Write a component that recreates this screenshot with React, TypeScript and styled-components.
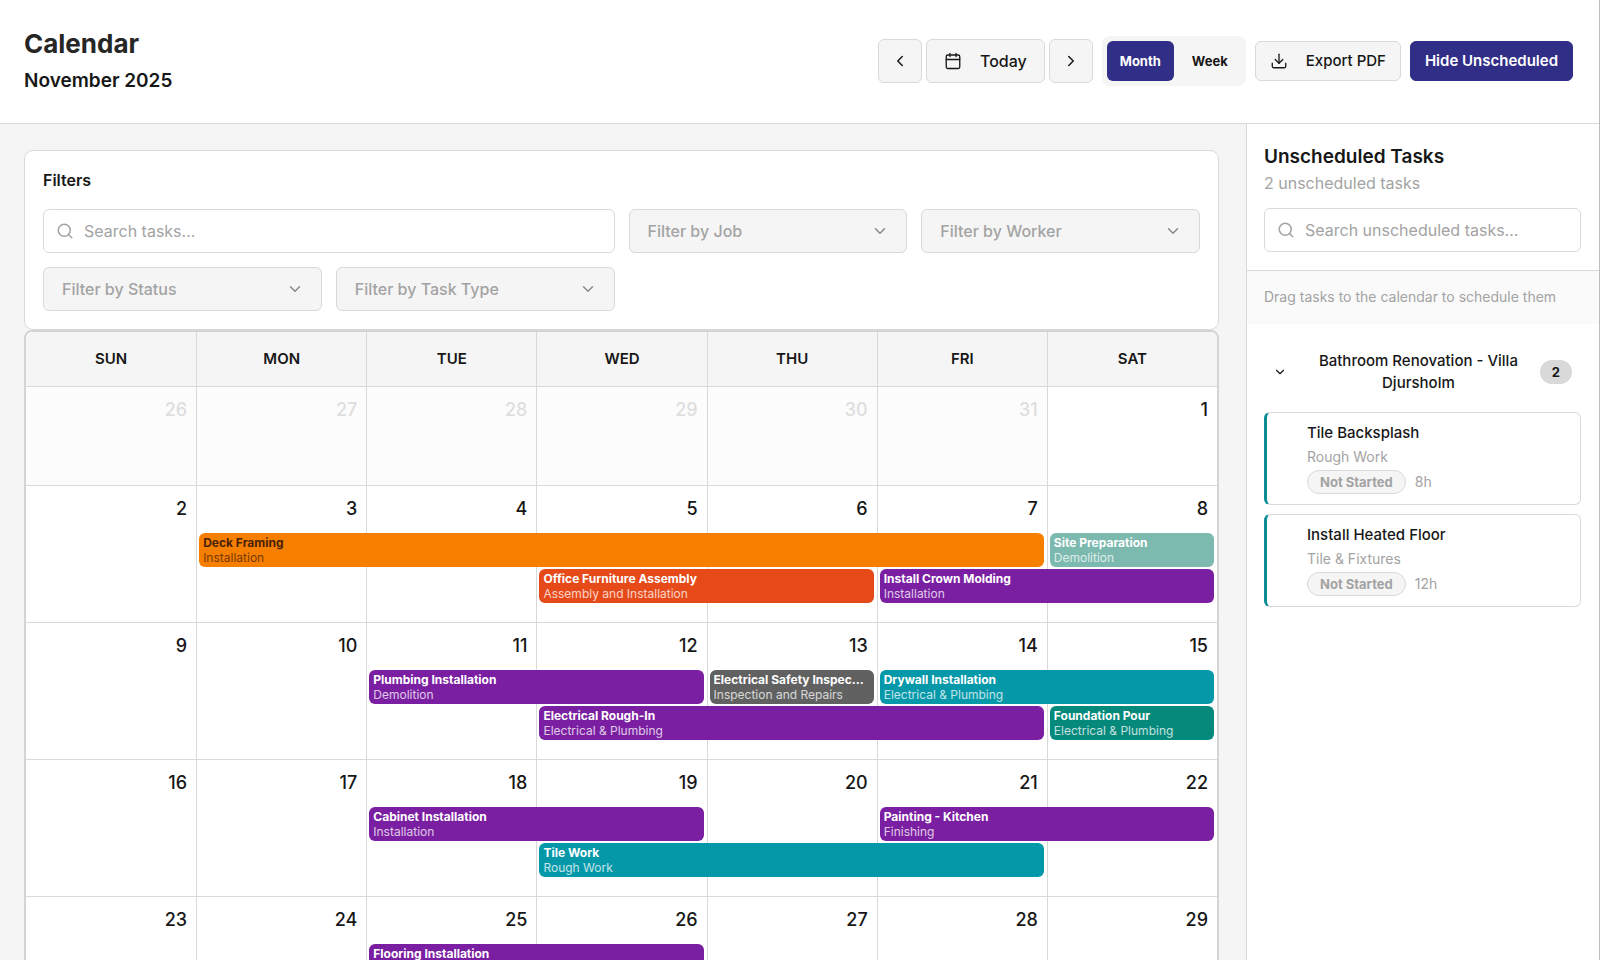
import React from "react";
import styled, { createGlobalStyle, css } from "styled-components";
import { Calendar, ChevronDown, ChevronLeft, ChevronRight, Download, Search } from "lucide-react";

const line = "#d9d9d9";
const ink = "#171717";
const muted = "#a3a3a3";
const brand = "#312e87";
const surface = "#f5f5f5";

const GlobalStyle = createGlobalStyle`
  *, *::before, *::after { box-sizing: border-box; }
  body { margin: 0; background: #fff; color: ${ink}; font: 500 16px/22px Inter, "Liberation Sans", sans-serif; }
  h1, h2, h3, p, ul { margin: 0; padding: 0; }
  button, input, select { font: inherit; color: inherit; }
  button { cursor: pointer; }
`;

const Page = styled.div`
  display: flex;
  flex-direction: column;
  height: 100vh;
  overflow: hidden;
  border-right: 1px solid #bdbdbd;
`;

const Header = styled.header`
  display: flex;
  flex: none;
  align-items: center;
  justify-content: space-between;
  padding: 24px 26px 25px 24px;
  border-bottom: 1px solid ${line};
`;

const Title = styled.h1`
  font-size: 26px;
  line-height: 39px;
  font-weight: 700;
  color: #262626;
`;

const Subtitle = styled.p`
  font-size: 19px;
  line-height: 35px;
  font-weight: 600;
`;

const Toolbar = styled.div`
  display: flex;
  align-items: center;
  gap: 9px;
`;

const NavGroup = styled.div`
  display: flex;
  gap: 4px;
`;

const Button = styled.button<{ $kind?: "primary" }>`
  display: flex;
  align-items: center;
  justify-content: center;
  gap: 18px;
  height: 40px;
  padding: 0 14px;
  border: 1px solid ${line};
  border-radius: 6px;
  background: ${surface};
  font-size: 15px;
  white-space: nowrap;
  ${(p) =>
    p.$kind === "primary" &&
    css`
      background: ${brand};
      border-color: ${brand};
      color: #fff;
      font-weight: 600;
    `}
`;

const StepButton = styled(Button)`
  width: 44px;
  height: 44px;
  padding: 0;
`;

const TodayButton = styled(Button)`
  height: 44px;
  padding: 0 17px;
  font-size: 16px;
`;

const Toggle = styled.div`
  display: flex;
  gap: 5px;
  padding: 5px;
  border-radius: 8px;
  background: ${surface};
`;

const ToggleButton = styled.button<{ $active?: boolean }>`
  height: 40px;
  padding: 0 13px;
  border: 0;
  border-radius: 6px;
  font-size: 13px;
  font-weight: 700;
  background: ${(p) => (p.$active ? brand : "transparent")};
  color: ${(p) => (p.$active ? "#fff" : ink)};
`;

const Body = styled.div`
  display: flex;
  flex: 1;
  min-height: 0;
`;

const Main = styled.main`
  flex: 1;
  min-width: 0;
  overflow: hidden;
  padding: 26px 27px 0 24px;
  background: ${surface};
`;

const FilterCard = styled.section`
  padding: 18px;
  border: 1px solid ${line};
  border-radius: 9px;
  background: #fff;
`;

const FilterTitle = styled.h2`
  margin-bottom: 18px;
  font-size: 16px;
  line-height: 22px;
  font-weight: 600;
`;

const FilterGrid = styled.div`
  display: grid;
  grid-template-columns: repeat(4, minmax(0, 1fr));
  gap: 14px;
`;

const Field = styled.div<{ $wide?: boolean }>`
  position: relative;
  display: flex;
  align-items: center;
  color: ${muted};
  ${(p) => p.$wide && "grid-column: span 2;"}
`;

const SearchInput = styled.input`
  width: 100%;
  height: 44px;
  padding: 0 16px 0 40px;
  border: 1px solid ${line};
  border-radius: 6px;
  background: #fff;
  color: ${ink};
  font-weight: 400;
  &::placeholder { color: ${muted}; opacity: 1; }
`;

const SearchIcon = styled(Search)`
  position: absolute;
  left: 13px;
`;

const Select = styled.select`
  appearance: none;
  width: 100%;
  height: 44px;
  padding: 0 40px 0 18px;
  border: 1px solid ${line};
  border-radius: 6px;
  background: ${surface};
`;

const SelectIcon = styled(ChevronDown)`
  position: absolute;
  right: 18px;
  pointer-events: none;
  color: #8a8a8a;
`;

const CalendarGrid = styled.section`
  border: 2px solid #d4d4d4;
  border-radius: 8px;
  overflow: hidden;
  background: #fff;
`;

const WeekHead = styled.div`
  display: grid;
  grid-template-columns: repeat(7, minmax(0, 1fr));
  background: ${surface};
`;

const DayName = styled.div`
  padding: 16px 0;
  text-align: center;
  font-size: 15px;
  font-weight: 600;
  border-bottom: 1px solid ${line};
  & + & { border-left: 1px solid ${line}; }
`;

const Week = styled.div<{ $lanes: number }>`
  display: grid;
  grid-template-columns: repeat(7, minmax(0, 1fr));
  grid-template-rows: 47px ${(p) => (p.$lanes ? `repeat(${p.$lanes}, 36px)` : "34px")} 17px;
  border-bottom: 1px solid ${line};
`;

const Day = styled.div<{ $col: number; $outside: boolean }>`
  grid-column: ${(p) => p.$col};
  grid-row: 1 / -1;
  padding: 11px 9px;
  text-align: right;
  font-size: 18px;
  line-height: 24px;
  color: ${(p) => (p.$outside ? "#dedede" : ink)};
  background: ${(p) => (p.$outside ? "#fcfcfc" : "#fff")};
  border-left: ${(p) => (p.$col > 1 ? `1px solid ${line}` : "0")};
`;

const EventBar = styled.button<{ $from: number; $to: number; $lane: number; $color: string; $dark?: boolean }>`
  z-index: 1;
  grid-column: ${(p) => p.$from} / ${(p) => p.$to + 1};
  grid-row: ${(p) => p.$lane + 1};
  min-width: 0;
  height: 34px;
  margin: 0 3px;
  padding: 2px 9px 2px 4px;
  border: 0;
  border-radius: 6px;
  text-align: left;
  font-size: 12px;
  line-height: 15px;
  background: ${(p) => p.$color};
  color: ${(p) => (p.$dark ? "#4a2208" : "#fff")};
`;

const EventName = styled.span`
  display: block;
  overflow: hidden;
  text-overflow: ellipsis;
  white-space: nowrap;
  font-weight: 700;
`;

const EventType = styled(EventName)`
  font-weight: 400;
  opacity: 0.75;
`;

const Sidebar = styled.aside`
  flex: none;
  width: 353px;
  border-left: 1px solid ${line};
  background: #fff;
`;

const SideHead = styled.div`
  padding: 18px 18px 18px 17px;
  border-bottom: 1px solid ${line};
`;

const SideTitle = styled.h2`
  font-size: 19px;
  line-height: 29px;
  font-weight: 600;
`;

const SideCount = styled.p`
  margin-bottom: 13px;
  line-height: 24px;
  font-weight: 400;
  color: ${muted};
`;

const Hint = styled.p`
  padding: 15px 17px 17px;
  background: #fafafa;
  color: ${muted};
  font-size: 14px;
  line-height: 21px;
  font-weight: 400;
`;

const Group = styled.section`
  padding: 17px 18px 0 17px;
`;

const GroupToggle = styled.button`
  display: flex;
  align-items: center;
  gap: 18px;
  width: 100%;
  margin-bottom: 9px;
  padding: 9px;
  border: 0;
  background: none;
`;

const GroupName = styled.span`
  flex: 1;
  padding-left: 10px;
  text-align: center;
  font-size: 15px;
`;

const Count = styled.span`
  padding: 0 12px;
  border-radius: 12px;
  background: #d9d9d9;
  font-size: 13px;
  line-height: 24px;
  font-weight: 700;
`;

const TaskList = styled.ul`
  display: flex;
  flex-direction: column;
  gap: 9px;
  list-style: none;
`;

const Task = styled.li`
  padding: 9px 9px 9px 40px;
  border: 1px solid ${line};
  border-left: 3px solid #0b8d96;
  border-radius: 6px;
`;

const TaskTitle = styled.h3`
  font-size: 15px;
  line-height: 22px;
  font-weight: 500;
`;

const TaskType = styled.p`
  font-size: 14px;
  line-height: 25px;
  font-weight: 400;
  color: ${muted};
`;

const TaskMeta = styled(TaskType)`
  display: flex;
  align-items: center;
  gap: 9px;
  line-height: 26px;
`;

const Status = styled.span`
  padding: 0 12px;
  border: 1px solid ${line};
  border-radius: 12px;
  background: ${surface};
  font-size: 13px;
  line-height: 22px;
  font-weight: 700;
`;

type Item = { name: string; type: string; from: number; to: number; lane: number; color: string; dark?: boolean };

const purple = "#7b1fa2";
const cyan = "#0598a9";

const weeks: { days: number[]; events: Item[] }[] = [
  { days: [26, 27, 28, 29, 30, 31, 1], events: [] },
  {
    days: [2, 3, 4, 5, 6, 7, 8],
    events: [
      { name: "Deck Framing", type: "Installation", from: 2, to: 6, lane: 1, color: "#f77f00", dark: true },
      { name: "Site Preparation", type: "Demolition", from: 7, to: 7, lane: 1, color: "#7cb9af" },
      { name: "Office Furniture Assembly", type: "Assembly and Installation", from: 4, to: 5, lane: 2, color: "#e64a19" },
      { name: "Install Crown Molding", type: "Installation", from: 6, to: 7, lane: 2, color: purple },
    ],
  },
  {
    days: [9, 10, 11, 12, 13, 14, 15],
    events: [
      { name: "Plumbing Installation", type: "Demolition", from: 3, to: 4, lane: 1, color: purple },
      { name: "Electrical Safety Inspection", type: "Inspection and Repairs", from: 5, to: 5, lane: 1, color: "#616161" },
      { name: "Drywall Installation", type: "Electrical & Plumbing", from: 6, to: 7, lane: 1, color: cyan },
      { name: "Electrical Rough-In", type: "Electrical & Plumbing", from: 4, to: 6, lane: 2, color: purple },
      { name: "Foundation Pour", type: "Electrical & Plumbing", from: 7, to: 7, lane: 2, color: "#04897b" },
    ],
  },
  {
    days: [16, 17, 18, 19, 20, 21, 22],
    events: [
      { name: "Cabinet Installation", type: "Installation", from: 3, to: 4, lane: 1, color: purple },
      { name: "Painting - Kitchen", type: "Finishing", from: 6, to: 7, lane: 1, color: purple },
      { name: "Tile Work", type: "Rough Work", from: 4, to: 6, lane: 2, color: cyan },
    ],
  },
  {
    days: [23, 24, 25, 26, 27, 28, 29],
    events: [{ name: "Flooring Installation", type: "Finishing", from: 3, to: 4, lane: 1, color: purple }],
  },
];

const tasks = [
  { title: "Tile Backsplash", type: "Rough Work", hours: "8h" },
  { title: "Install Heated Floor", type: "Tile & Fixtures", hours: "12h" },
];

const SearchField = ({ label, wide }: { label: string; wide?: boolean }) => (
  <Field $wide={wide}>
    <SearchIcon size={18} strokeWidth={2} aria-hidden />
    <SearchInput type="text" placeholder={label} aria-label={label} />
  </Field>
);

const FilterSelect = ({ label }: { label: string }) => (
  <Field>
    <Select aria-label={label}>
      <option>{label}</option>
    </Select>
    <SelectIcon size={18} aria-hidden />
  </Field>
);

export default function App() {
  return (
    <>
      <GlobalStyle />
      <Page>
        <Header>
          <div>
            <Title>Calendar</Title>
            <Subtitle>November 2025</Subtitle>
          </div>
          <Toolbar>
            <NavGroup>
              <StepButton aria-label="Previous month"><ChevronLeft size={18} /></StepButton>
              <TodayButton><Calendar size={18} strokeWidth={1.75} />Today</TodayButton>
              <StepButton aria-label="Next month"><ChevronRight size={18} /></StepButton>
            </NavGroup>
            <Toggle>
              <ToggleButton $active>Month</ToggleButton>
              <ToggleButton>Week</ToggleButton>
            </Toggle>
            <Button><Download size={18} strokeWidth={1.75} />Export PDF</Button>
            <Button $kind="primary">Hide Unscheduled</Button>
          </Toolbar>
        </Header>
        <Body>
          <Main>
            <FilterCard>
              <FilterTitle>Filters</FilterTitle>
              <FilterGrid>
                <SearchField label="Search tasks..." wide />
                <FilterSelect label="Filter by Job" />
                <FilterSelect label="Filter by Worker" />
                <FilterSelect label="Filter by Status" />
                <FilterSelect label="Filter by Task Type" />
              </FilterGrid>
            </FilterCard>
            <CalendarGrid aria-label="November 2025">
              <WeekHead>
                {["SUN", "MON", "TUE", "WED", "THU", "FRI", "SAT"].map((d) => <DayName key={d}>{d}</DayName>)}
              </WeekHead>
              {weeks.map((week, w) => (
                <Week key={w} $lanes={w === 0 ? 0 : 2}>
                  {week.days.map((day, i) => (
                    <Day key={day} $col={i + 1} $outside={w === 0 && day > 20}>{day}</Day>
                  ))}
                  {week.events.map((e) => (
                    <EventBar key={e.name} $from={e.from} $to={e.to} $lane={e.lane} $color={e.color} $dark={e.dark}>
                      <EventName>{e.name}</EventName>
                      <EventType>{e.type}</EventType>
                    </EventBar>
                  ))}
                </Week>
              ))}
            </CalendarGrid>
          </Main>
          <Sidebar>
            <SideHead>
              <SideTitle>Unscheduled Tasks</SideTitle>
              <SideCount>2 unscheduled tasks</SideCount>
              <SearchField label="Search unscheduled tasks..." />
            </SideHead>
            <Hint>Drag tasks to the calendar to schedule them</Hint>
            <Group>
              <GroupToggle aria-expanded="true">
                <ChevronDown size={14} aria-hidden />
                <GroupName>Bathroom Renovation - Villa Djursholm</GroupName>
                <Count>2</Count>
              </GroupToggle>
              <TaskList>
                {tasks.map((t) => (
                  <Task key={t.title}>
                    <TaskTitle>{t.title}</TaskTitle>
                    <TaskType>{t.type}</TaskType>
                    <TaskMeta><Status>Not Started</Status>{t.hours}</TaskMeta>
                  </Task>
                ))}
              </TaskList>
            </Group>
          </Sidebar>
        </Body>
      </Page>
    </>
  );
}
